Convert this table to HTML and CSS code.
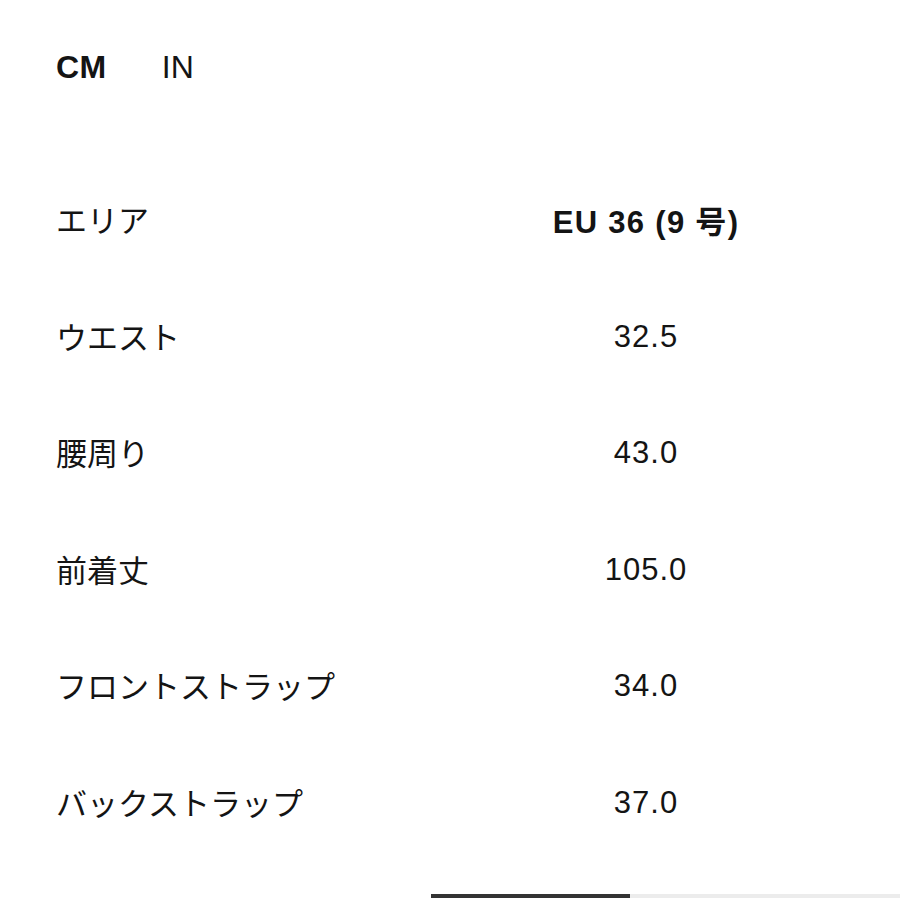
FILE: index.html
```html
<!DOCTYPE html>
<html lang="ja">
<head>
<meta charset="utf-8">
<link rel="stylesheet" href="styles.css">
</head>
<body>
<div class="page">
  <div class="units">
    <span class="unit active">CM</span>
    <span class="unit">IN</span>
  </div>
  <div class="table">
    <div class="row head">
      <div class="label">エリア</div>
      <div class="value">EU 36 (9 号)</div>
    </div>
    <div class="row">
      <div class="label">ウエスト</div>
      <div class="value">32.5</div>
    </div>
    <div class="row">
      <div class="label">腰周り</div>
      <div class="value">43.0</div>
    </div>
    <div class="row">
      <div class="label">前着丈</div>
      <div class="value">105.0</div>
    </div>
    <div class="row">
      <div class="label">フロントストラップ</div>
      <div class="value">34.0</div>
    </div>
    <div class="row">
      <div class="label">バックストラップ</div>
      <div class="value">37.0</div>
    </div>
  </div>
  <div class="track"><div class="thumb"></div></div>
</div>
</body>
</html>
```

FILE: styles.css
```css
html, body {
  margin: 0;
  padding: 0;
  background: #ffffff;
}
body {
  font-family: "Liberation Sans", "Noto Sans CJK JP", sans-serif;
  color: #141414;
  width: 900px;
  height: 900px;
  overflow: hidden;
}
.page {
  display: flex;
  flex-direction: column;
  padding-top: 47px;
}
.units {
  display: flex;
  gap: 55px;
  padding-left: 56px;
  height: 40px;
  line-height: 40px;
  font-size: 32px;
}
.unit.active {
  font-weight: 700;
  letter-spacing: 0.5px;
}
.table {
  margin-top: 74.7px;
  display: flex;
  flex-direction: column;
}
.row {
  display: grid;
  grid-template-columns: 336px 1fr;
  height: 116.6px;
  align-items: center;
  padding-left: 56px;
  font-size: 31px;
}
.label {
  padding-bottom: 3px;
}
.value {
  text-align: center;
  letter-spacing: 1px;
}
.head .value {
  font-weight: 700;
  letter-spacing: 1.3px;
}
.track {
  margin-top: 33px;
  margin-left: 431px;
  height: 4px;
  background: #ececec;
  display: flex;
}
.thumb {
  width: 199px;
  height: 4px;
  background: #333333;
}
```
